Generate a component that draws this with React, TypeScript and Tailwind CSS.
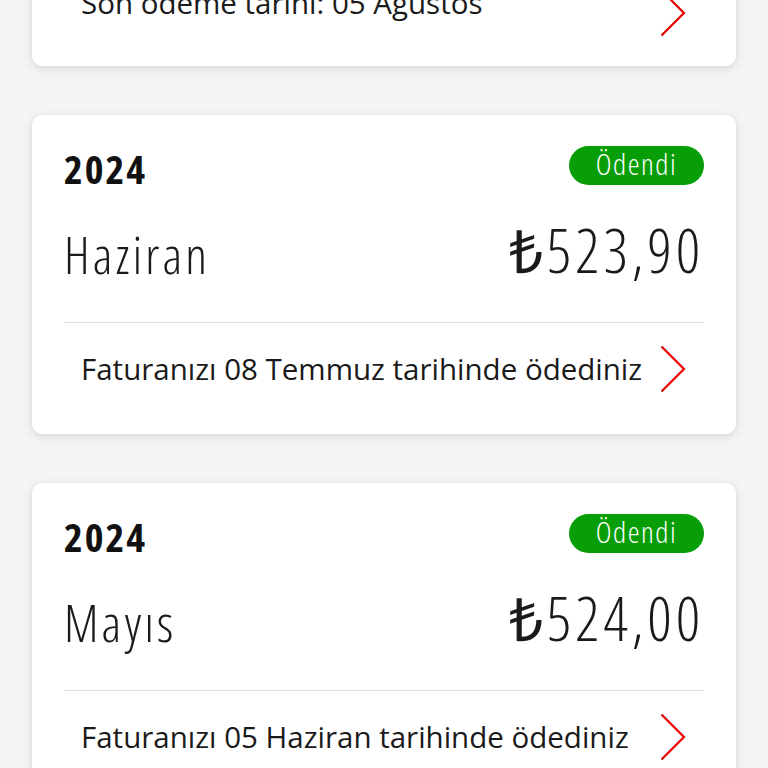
const bills = [
  { year: '2024', month: 'Haziran', amount: '523,90', note: 'Faturanızı 08 Temmuz tarihinde ödediniz' },
  { year: '2024', month: 'Mayıs', amount: '524,00', note: 'Faturanızı 05 Haziran tarihinde ödediniz' },
];

function Chevron() {
  return (
    <svg width="26" height="48" viewBox="0 0 26 48" fill="none" className="shrink-0">
      <path d="M1.5 1.5 L24 24 L1.5 46.5" stroke="#e60000" strokeWidth="2.2" strokeLinejoin="miter" />
    </svg>
  );
}

function BillCard({ year, month, amount, note }: { year: string; month: string; amount: string; note: string }) {
  return (
    <div className="bg-white rounded-[10px] shadow-[0_2px_8px_rgba(0,0,0,0.14)] px-8 pt-[31px] pb-[41px]">
      <div className="flex items-start justify-between">
        <span className="mt-[3px] text-[40px] leading-none font-bold font-stretch-condensed tracking-[0.05em] text-[#111]">
          {year}
        </span>
        <span className="flex items-center justify-center h-[39px] w-[135px] pb-[3px] rounded-full bg-[#079e07] text-white text-[30px] leading-none font-light font-stretch-condensed tracking-[0.05em]">
          Ödendi
        </span>
      </div>
      <div className="mt-[31px] flex items-end justify-between text-[#1a1a1a]">
        <span className="text-[51px] leading-none font-light font-stretch-condensed tracking-[0.06em]">{month}</span>
        <span className="text-[60px] leading-none font-light font-stretch-condensed tracking-[0.065em]">₺{amount}</span>
      </div>
      <div className="mt-[42px] h-px bg-[#dcdcdc]" />
      <div className="mt-[22px] flex items-center justify-between pl-[17px] pr-[18px]">
        <span className="text-[29.5px] leading-none text-[#1a1a1a]">{note}</span>
        <Chevron />
      </div>
    </div>
  );
}

export default function App() {
  return (
    <div className="h-[768px] bg-[#f4f4f4] font-['Open_Sans',sans-serif] px-8 overflow-hidden">
      <div className="flex flex-col gap-[49px]">
        <div className="-mt-[54px] h-[120px] bg-white rounded-[10px] shadow-[0_2px_8px_rgba(0,0,0,0.14)] px-8 pb-[29px] flex flex-col justify-end">
          <div className="flex items-end justify-between pl-[17px] pr-[18px]">
            <span className="mb-[20px] text-[29.5px] leading-none text-[#1a1a1a]">Son ödeme tarihi: 05 Ağustos</span>
            <Chevron />
          </div>
        </div>
        {bills.map((b) => (
          <BillCard key={b.month} {...b} />
        ))}
      </div>
    </div>
  );
}
